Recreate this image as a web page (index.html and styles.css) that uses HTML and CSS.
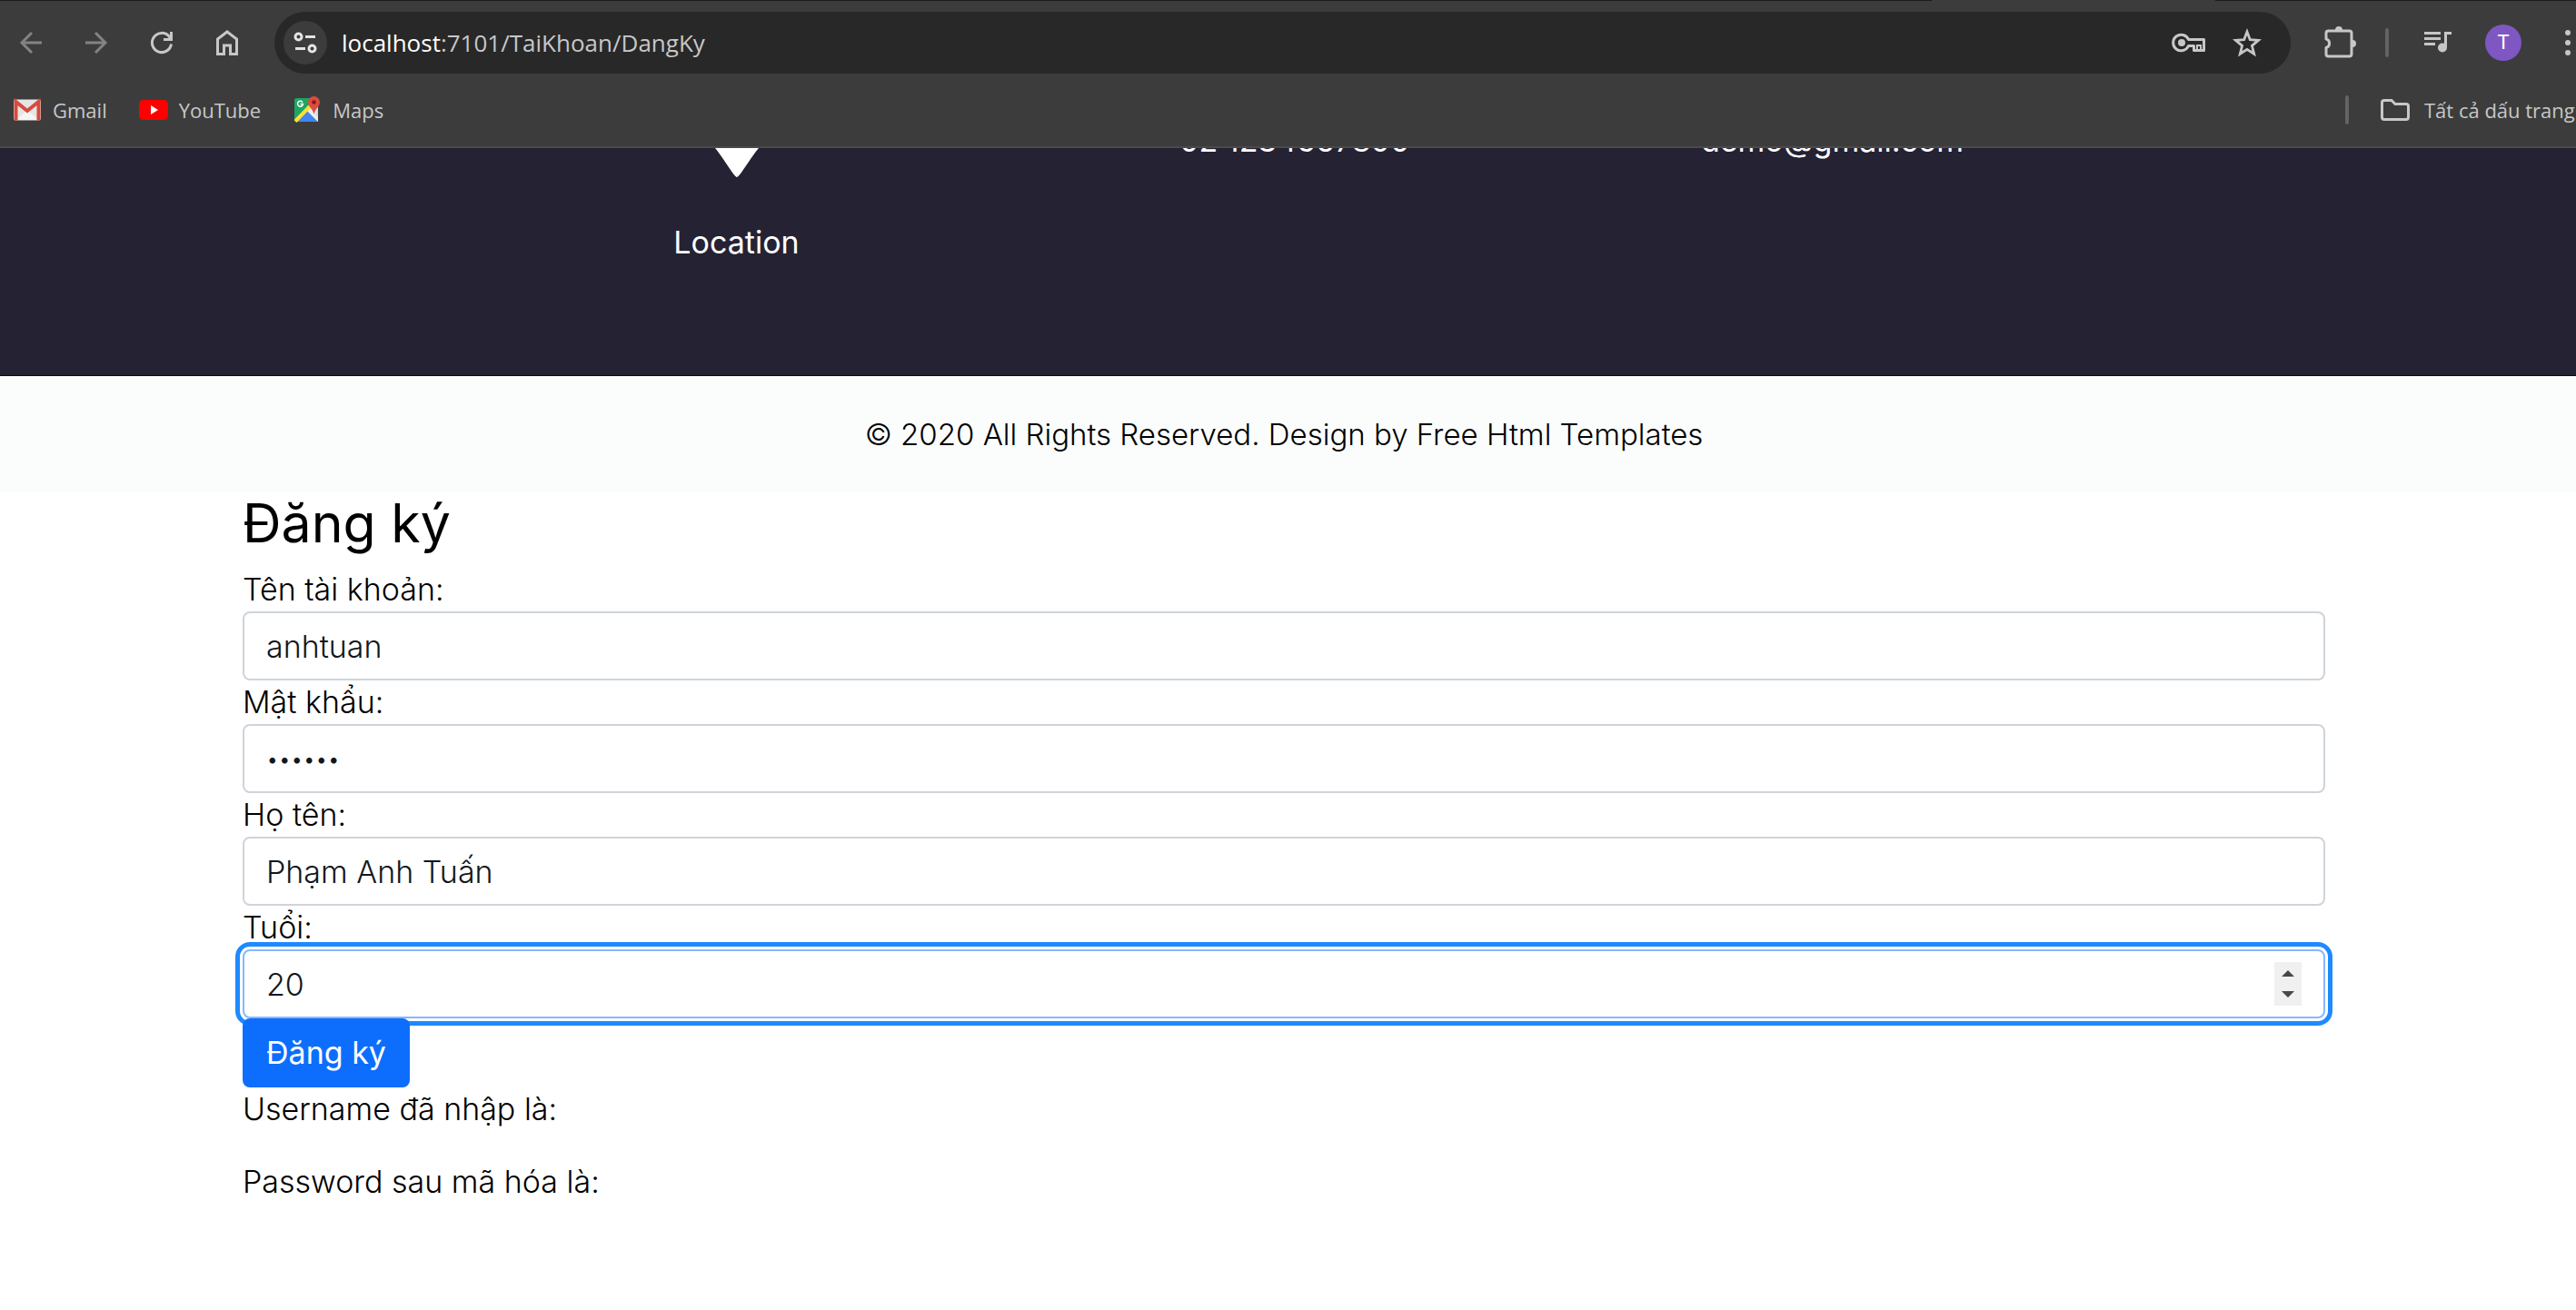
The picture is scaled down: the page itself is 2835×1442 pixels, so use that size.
FILE: index.html
```html
<!DOCTYPE html>
<html lang="vi">
<head>
<meta charset="utf-8">
<meta name="viewport" content="width=device-width, initial-scale=1">
<title>Đăng ký</title>
<link rel="stylesheet" href="styles.css">
</head>
<body>
<header class="browser">
  <div class="toolbar">
    <nav class="toolbar__nav" aria-label="Browser">
      <button class="tool tool--dim" type="button" aria-label="Back">
        <svg width="32" height="32" viewBox="0 0 32 32"><path d="M28 16H6M17 5 6 16l11 11" fill="none" stroke="currentColor" stroke-width="3"/></svg>
      </button>
      <button class="tool tool--dim" type="button" aria-label="Forward">
        <svg width="32" height="32" viewBox="0 0 32 32"><path d="M4 16h22M15 5l11 11-11 11" fill="none" stroke="currentColor" stroke-width="3"/></svg>
      </button>
      <button class="tool" type="button" aria-label="Reload">
        <svg width="32" height="32" viewBox="0 0 32 32"><path d="M26.500 17.500A10.600 10.600 0 1 1 24 9l2 3M26.500 4v8.500H18" fill="none" stroke="currentColor" stroke-width="3"/></svg>
      </button>
      <button class="tool" type="button" aria-label="Home">
        <svg width="32" height="32" viewBox="0 0 32 32"><path d="M5.500 28.500V12L16 4l10.500 8v16.500h-7v-9.500h-7v9.500z" fill="none" stroke="currentColor" stroke-width="3"/></svg>
      </button>
    </nav>
    <div class="address">
      <button class="address__site" type="button" aria-label="Site information">
        <svg width="32" height="32" viewBox="0 0 32 32" fill="none" stroke="currentColor" stroke-width="3"><circle cx="8.500" cy="9.500" r="3.500"/><path d="M16 9.500h11M5 22.500h11"/><circle cx="23.500" cy="22.500" r="3.500"/></svg>
      </button>
      <span class="address__url"><span class="address__host">localhost</span>:7101/TaiKhoan/DangKy</span>
      <button class="address__action" type="button" aria-label="Passwords">
        <svg width="40" height="32" viewBox="0 0 40 32"><path d="M19.500 12.500A8.800 8.800 0 1 0 19.500 19.500H25.500V24.500H36.500V12.500z" fill="none" stroke="currentColor" stroke-width="3" stroke-linejoin="round"/><circle cx="12" cy="16" r="4" fill="currentColor"/><path d="M29 24v-5h4v5" fill="none" stroke="currentColor" stroke-width="2"/></svg>
      </button>
      <button class="address__action" type="button" aria-label="Bookmark this page">
        <svg width="32" height="32" viewBox="0 0 32 32"><path d="m16 4 3.300 8.700 9.200.7-7.100 5.900 2.300 9L16 23.400l-7.700 4.900 2.300-9-7.100-5.900 9.200-.7z" fill="none" stroke="currentColor" stroke-width="2.800"/></svg>
      </button>
    </div>
    <div class="toolbar__extras">
      <button class="tool" type="button" aria-label="Extensions">
        <svg width="36" height="36" viewBox="0 0 36 36"><path d="M4 8.500q0-2.500 2.500-2.500h23q2.500 0 2.500 2.500v23q0 2.500-2.500 2.500h-23Q4 34 4 31.500v-7a5 5 0 0 0 0-9.600z" transform="translate(-1 -1)" fill="none" stroke="currentColor" stroke-width="3" stroke-linejoin="round"/><path d="M13 4a4 4 0 0 1 8 0zM32 15a4 4 0 0 1 0 8z" fill="currentColor"/></svg>
      </button>
      <span class="divider"></span>
      <button class="tool" type="button" aria-label="Media controls">
        <svg width="32" height="32" viewBox="0 0 32 32"><path d="M1 5.500h18M1 11.500h18M1 17.500h12M24.500 22V5.500H31" fill="none" stroke="currentColor" stroke-width="3"/><circle cx="21" cy="21.500" r="5" fill="currentColor"/></svg>
      </button>
      <button class="tool" type="button" aria-label="Profile"><span class="avatar">T</span></button>
      <button class="tool tool--menu" type="button" aria-label="Menu">
        <svg width="8" height="32" viewBox="0 0 8 32" fill="currentColor"><circle cx="4" cy="5" r="3"/><circle cx="4" cy="16" r="3"/><circle cx="4" cy="27" r="3"/></svg>
      </button>
    </div>
  </div>
  <nav class="bookmarks" aria-label="Bookmarks">
    <a class="bookmark" href="#">
      <svg width="32" height="32" viewBox="0 0 32 32"><rect x="1" y="4.500" width="30" height="23" rx="2" fill="#e5e5e5"/><path d="m4 27 12-11 12 11z" fill="#f5f5f5"/><path d="M3.500 27.500V7L16 17 28.500 7v20.500" fill="none" stroke="#d54b3d" stroke-width="4"/></svg>
      Gmail
    </a>
    <a class="bookmark" href="#">
      <svg width="32" height="32" viewBox="0 0 32 32"><rect y="5" width="32" height="22" rx="5" fill="#f00"/><path d="m13 11 8 5-8 5z" fill="#fff"/></svg>
      YouTube
    </a>
    <a class="bookmark" href="#">
      <svg width="32" height="32" viewBox="0 0 32 32"><rect x="2" y="3" width="26" height="26" rx="2" fill="#1fa463"/><path d="M28 3v26L16 17z" fill="#ddd"/><path d="m4 29 12-12 12 12z" fill="#4285f4"/><path d="m16 17 3-3 9 11v4z" fill="#eee"/><path d="M3 28.500 19 12" stroke="#fde033" stroke-width="4"/><path d="M11 7.500A3 3 0 1 0 11.500 9.500H8.500" fill="none" stroke="#fff" stroke-width="1.500"/><path d="M23.500 1a6.500 6.500 0 0 1 6.500 6.500c0 5-5.500 7-6.500 13.500-1-6.500-6.500-8.500-6.500-13.500A6.500 6.500 0 0 1 23.500 1z" fill="#e04a3f"/><circle cx="23.500" cy="7.500" r="2.300" fill="#7b1f18"/></svg>
      Maps
    </a>
    <span class="divider divider--push"></span>
    <a class="bookmark bookmark--all" href="#">
      <svg width="32" height="32" viewBox="0 0 32 32"><path d="M1.500 8q0-2.500 2.500-2.500h8l4 4h12q2.500 0 2.500 2.500v12q0 2.500-2.500 2.500h-24q-2.500 0-2.500-2.500z" fill="none" stroke="currentColor" stroke-width="3"/></svg>
      Tất cả dấu trang
    </a>
  </nav>
</header>

<section class="contact">
  <div class="contact__row">
    <a class="contact__item" href="#">
      <svg class="contact__pin" width="88" height="64" viewBox="0 0 88 64"><path d="M44 64C41 64 30 44 20 32Q10 18 8 0H80Q78 18 68 32C58 44 47 64 44 64z" fill="#fff"/></svg>
      Location
    </a>
    <a class="contact__item" href="#">+02 1234567890</a>
    <a class="contact__item" href="#">demo@gmail.com</a>
  </div>
</section>

<footer class="footer">
  <p class="footer__text">© 2020 All Rights Reserved. Design by <a class="footer__link" href="#">Free Html Templates</a></p>
</footer>

<main class="main">
  <h3 class="title">Đăng ký</h3>
  <form class="form">
    <label class="label" for="username">Tên tài khoản:</label>
    <input class="control" id="username" type="text" value="anhtuan">
    <label class="label" for="password">Mật khẩu:</label>
    <input class="control control--password" id="password" type="password" value="123456">
    <label class="label" for="fullname">Họ tên:</label>
    <input class="control" id="fullname" type="text" value="Phạm Anh Tuấn">
    <label class="label" for="age">Tuổi:</label>
    <input class="control control--active" id="age" type="number" value="20">
    <button class="submit" type="button">Đăng ký</button>
  </form>
  <p class="result">Username đã nhập là:</p>
  <p class="result">Password sau mã hóa là:</p>
</main>
</body>
</html>
```
FILE: styles.css
```css
* {
  box-sizing: border-box;
}

body {
  margin: 0;
  background: #fff;
  color: #000;
  font: 300 34px/48px Inter, "Noto Sans", sans-serif;
  overflow-x: hidden;
}

button {
  border: 0;
  padding: 0;
  background: none;
  color: inherit;
  font: inherit;
}

a {
  color: inherit;
  text-decoration: none;
}

svg {
  display: block;
  flex: none;
}

/* Browser bar; the thin top strip is the tab row, broken by the active tab */
.browser {
  height: 163px;
  overflow: hidden;
  padding-top: 1px;
  border-bottom: 2px solid #4a4a4a;
  background: linear-gradient(90deg, #1c1c1c 75%, #3c3c3c 75% 86%, #1c1c1c 86%) top / 100% 1px no-repeat #3c3c3c;
  color: #c7c7c7;
  font: 400 22px/32px "Open Sans", "Noto Sans", sans-serif;
}

.toolbar {
  display: flex;
  align-items: center;
  height: 92px;
}

.toolbar__nav {
  display: flex;
  gap: 4px;
}

.tool {
  display: flex;
  flex: none;
  align-items: center;
  justify-content: center;
  width: 68px;
  height: 68px;
}

.tool--dim {
  color: #838383;
}

.tool--menu {
  width: 18px;
  margin-left: 24px;
}

.address {
  display: flex;
  flex: 1;
  align-items: center;
  height: 68px;
  margin: 0 20px 0 18px;
  padding: 0 16px 0 10px;
  border-radius: 34px;
  background: #282828;
  font-size: 26px;
}

.address__site {
  display: flex;
  align-items: center;
  justify-content: center;
  width: 48px;
  height: 48px;
  border-radius: 50%;
  background: #3c3c3c;
  color: #e3e3e3;
}

.address__url {
  flex: 1;
  margin-left: 16px;
}

.address__host {
  color: #fff;
}

.address__action {
  display: flex;
  align-items: center;
  justify-content: center;
  width: 64px;
  height: 64px;
}

.toolbar__extras {
  display: flex;
  align-items: center;
  gap: 4px;
}

.divider {
  width: 4px;
  height: 32px;
  margin: 0 16px 0 12px;
  border-radius: 2px;
  background: #636363;
}

.avatar {
  width: 40px;
  height: 40px;
  border-radius: 50%;
  background: #7e57c2;
  color: #fff;
  font: 400 22px/40px Roboto, sans-serif;
}

.bookmarks {
  display: flex;
  align-items: center;
  gap: 35px;
  height: 56px;
  padding-left: 14px;
}

.bookmark {
  display: flex;
  align-items: center;
  gap: 12px;
  white-space: nowrap;
}

.divider--push {
  margin: 0 0 0 auto;
}

.bookmark--all {
  gap: 16px;
  width: 215px;
}

/* Contact strip, scrolled part way under the browser bar */
.contact {
  overflow: hidden;
  padding: 0 517px 122px 509px;
  border-bottom: 1px solid #0b0a20;
  background: #252233;
  color: #fff;
  font-weight: 400;
}

.contact__row {
  display: grid;
  grid-template-columns: repeat(3, 1fr);
  align-items: start;
  margin-top: -32px;
}

.contact__item {
  text-align: center;
}

.contact__pin {
  margin: 0 auto 48px;
}

.footer {
  padding: 40px 9px 40px 0;
  background: #fbfdfc;
  font-size: 33px;
  text-align: center;
}

.footer__text {
  margin: 0;
}

/* Registration form */
.main {
  padding: 0 276px 0 267px;
}

.title {
  margin: 0 0 16px;
  font-size: 59px;
  font-weight: 400;
  line-height: 67px;
}

.form {
  display: flex;
  flex-direction: column;
  align-items: flex-start;
}

.control {
  width: 100%;
  height: 76px;
  padding: 12px 24px;
  border: 2px solid #ced4da;
  border-radius: 8px;
  background: #fff;
  color: #12171c;
  font: inherit;
}

.control--password {
  font-size: 24px;
}

.control--active {
  border-color: #86b7fe;
  outline: 5px solid #1f8aff;
  outline-offset: 3px;
}

.control::-webkit-inner-spin-button {
  width: 30px;
  height: 48px;
  appearance: none;
  opacity: 1;
  background: #f0f0f0 url("data:image/svg+xml,%3Csvg xmlns='http://www.w3.org/2000/svg' width='30' height='48'%3E%3Cpath d='M8 16l7-7 7 7zM8 32l7 7 7-7z' fill='%23484848'/%3E%3C/svg%3E") no-repeat;
}

.submit {
  position: relative;
  height: 76px;
  padding: 0 26px;
  border-radius: 8px;
  background: #0d6efd;
  color: #fff;
  font-weight: 400;
}

.result {
  margin: 0 0 32px;
}
```
